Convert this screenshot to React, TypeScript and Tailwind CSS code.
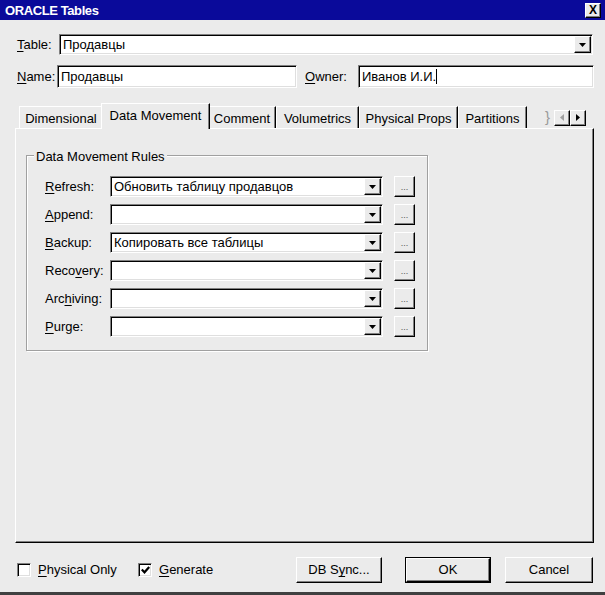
import React from "react";

const sunken =
  "bg-white border border-t-[#808080] border-l-[#808080] border-b-white border-r-white shadow-[inset_1px_1px_0_#000,inset_-1px_-1px_0_#dfdfdf]";
const raised =
  "bg-[#ebebeb] border border-t-white border-l-white border-b-black border-r-black shadow-[inset_-1px_-1px_0_#808080]";

function U({ children }: { children: React.ReactNode }) {
  return <span className="underline underline-offset-2 decoration-1">{children}</span>;
}

function DownArrow() {
  return (
    <svg width="7" height="4" viewBox="0 0 7 4">
      <path d="M0 0h7L3.5 4z" fill="#000" />
    </svg>
  );
}

function Combo({ text, className }: { text: string; className?: string }) {
  return (
    <div className={`${sunken} h-[21px] flex items-center ${className ?? ""}`}>
      <span className="flex-1 pl-[3px] whitespace-nowrap overflow-hidden">{text}</span>
      <div className={`${raised} w-[17px] h-[17px] mr-[1px] flex items-center justify-center`}>
        <DownArrow />
      </div>
    </div>
  );
}

function Tab({ label, w, selected }: { label: string; w: number; selected?: boolean }) {
  if (selected) {
    return (
      <div
        className="relative z-10 -mx-[2px] -mb-[1px] h-[26px] bg-[#ebebeb] border-t border-l border-t-white border-l-white border-r border-r-black shadow-[inset_-1px_0_0_#808080] flex items-center justify-center pb-[1px]"
        style={{ width: w + 4 }}
      >
        {label}
      </div>
    );
  }
  return (
    <div
      className="h-[22px] bg-[#ebebeb] border-t border-l border-t-white border-l-white border-r border-r-black shadow-[inset_-1px_0_0_#808080] flex items-center justify-center pt-[2px]"
      style={{ width: w }}
    >
      {label}
    </div>
  );
}

const rows: { label: React.ReactNode; text: string }[] = [
  { label: <><U>R</U>efresh:</>, text: "Обновить таблицу продавцов" },
  { label: <><U>A</U>ppend:</>, text: "" },
  { label: <><U>B</U>ackup:</>, text: "Копировать все таблицы" },
  { label: <>Reco<U>v</U>ery:</>, text: "" },
  { label: <>Arc<U>h</U>iving:</>, text: "" },
  { label: <><U>P</U>urge:</>, text: "" },
];

export default function App() {
  return (
    <div
      className="w-[605px] h-[595px] bg-[#ebebeb] flex flex-col overflow-hidden text-[13px] text-black border-b-[3px] border-b-[#404040]"
      style={{ fontFamily: '"Liberation Sans", Arial, sans-serif' }}
    >
      {/* Title bar */}
      <div className="h-[20px] bg-[#0a0a9a] flex items-center justify-between pl-[5px] pr-[4px] shrink-0">
        <span className="text-white font-bold text-[13px] tracking-[-0.4px] leading-none">
          ORACLE Tables
        </span>
        <div className={`${raised} w-[16px] h-[15px] flex items-center justify-center text-[12px] font-bold leading-none`}>
          X
        </div>
      </div>

      {/* Table row */}
      <div className="flex items-center mt-[14px] pl-[17px] h-[21px]">
        <span className="w-[42px]"><U>T</U>able:</span>
        <Combo text="Продавцы" className="w-[534px]" />
      </div>

      {/* Name / Owner row */}
      <div className="flex items-center mt-[10px] pl-[17px] h-[23px]">
        <span className="w-[40px]"><U>N</U>ame:</span>
        <div className={`${sunken} w-[240px] h-[23px] flex items-center pl-[3px]`}>Продавцы</div>
        <span className="w-[53px] ml-[8px]"><U>O</U>wner:</span>
        <div className={`${sunken} w-[236px] h-[23px] flex items-center pl-[3px]`}>
          Иванов И.И.<span className="inline-block w-[1px] h-[15px] bg-black" />
        </div>
      </div>

      {/* Tabs */}
      <div className="mt-[15px] ml-[15px] w-[579px] flex flex-col">
        <div className="h-[25px] flex items-end pl-[4px] relative">
          <Tab label="Dimensional" w={84} />
          <Tab label="Data Movement" w={105} selected />
          <Tab label="Comment" w={68} />
          <Tab label="Volumetrics" w={83} />
          <Tab label="Physical Props" w={99} />
          <Tab label="Partitions" w={69} />
          <div className="h-[22px] w-[27px] flex items-center justify-end pr-[4px] text-[#9a9a9a] text-[15px]">
            {"}"}
          </div>
          <div className="flex self-center mt-[4px]">
            <div className={`${raised} w-[16px] h-[16px] flex items-center justify-center`}>
              <svg width="4" height="7" viewBox="0 0 4 7"><path d="M4 0v7L0 3.5z" fill="#a0a0a0" /></svg>
            </div>
            <div className={`${raised} w-[16px] h-[16px] flex items-center justify-center`}>
              <svg width="4" height="7" viewBox="0 0 4 7"><path d="M0 0v7L4 3.5z" fill="#000" /></svg>
            </div>
          </div>
        </div>

        {/* Panel */}
        <div className="h-[415px] border border-t-white border-l-white border-r-black border-b-black shadow-[inset_-1px_-1px_0_#808080] pl-[10px] pt-[26px]">
          {/* Group box */}
          <div className="relative w-[402px] h-[196px] border border-[#a0a0a0] shadow-[1px_1px_0_#fff,inset_1px_1px_0_#fff] pl-[18px] pt-[20px] flex flex-col gap-[7px]">
            <span className="absolute -top-[7px] left-[7px] px-[2px] bg-[#ebebeb] leading-[15px]">
              Data Movement Rules
            </span>
            {rows.map((r, i) => (
              <div key={i} className="flex items-center h-[21px]">
                <span className="w-[65px]">{r.label}</span>
                <Combo text={r.text} className="w-[273px]" />
                <div className={`${raised} ml-[11px] w-[21px] h-[21px] flex items-end justify-center pb-[4px] text-[9px] leading-none text-[#555]`}>
                  ...
                </div>
              </div>
            ))}
          </div>
        </div>
      </div>

      {/* Bottom row */}
      <div className="flex items-center mt-[14px] h-[26px] pl-[17px]">
        <div className="flex items-center w-[121px]">
          <div className={`${sunken} w-[14px] h-[14px]`} />
          <span className="ml-[7px]"><U>P</U>hysical Only</span>
        </div>
        <div className="flex items-center w-[158px]">
          <div className={`${sunken} w-[14px] h-[14px] flex items-center justify-center`}>
            <svg width="9" height="8" viewBox="0 0 9 8">
              <path d="M0.8 3.5l2.7 2.8L8.2 1" stroke="#000" strokeWidth="2.2" fill="none" />
            </svg>
          </div>
          <span className="ml-[7px]"><U>G</U>enerate</span>
        </div>
        <div className={`${raised} w-[86px] h-[26px] flex items-center justify-center`}>
          DB S<U>y</U>nc...
        </div>
        <div className="ml-[23px] w-[86px] h-[26px] border border-black">
          <div className={`${raised} w-full h-full flex items-center justify-center`}>OK</div>
        </div>
        <div className={`${raised} ml-[14px] w-[88px] h-[26px] flex items-center justify-center`}>
          Cancel
        </div>
      </div>
    </div>
  );
}
